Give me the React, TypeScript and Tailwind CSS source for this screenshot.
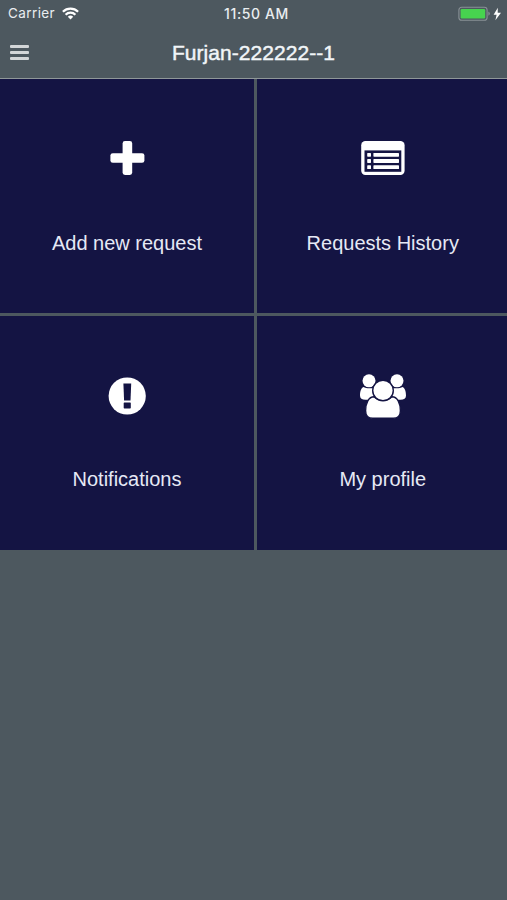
import type { ReactNode } from 'react';

const PlusIcon = () => (
  <svg width="46" height="50" viewBox="0 0 46 50" fill="#fff">
    <rect x="18.6" y="8" width="9.6" height="34" rx="2.4" />
    <rect x="6.4" y="20.2" width="34" height="9.6" rx="2.4" />
  </svg>
);

const ListIcon = () => (
  <svg width="46" height="50" viewBox="0 0 46 50">
    <rect x="1.2" y="8" width="43.4" height="34" rx="4.2" fill="#fff" />
    <rect x="4.5" y="17.4" width="36.8" height="21.4" fill="#141443" />
    {[19.9, 26.1, 32.3].map((y) => (
      <g key={y} fill="#fff">
        <rect x="7.2" y={y} width="3.8" height="3.8" rx="0.6" />
        <rect x="13.4" y={y} width="25.6" height="3.8" rx="0.6" />
      </g>
    ))}
  </svg>
);

const AlertIcon = () => (
  <svg width="46" height="50" viewBox="0 0 46 50">
    <circle cx="23.2" cy="26" r="18.6" fill="#fff" />
    <path d="M19.4 13.6h7.8l-.7 17h-6.4z" fill="#141443" />
    <rect x="19.7" y="32.4" width="7.1" height="6" rx="0.7" fill="#141443" />
  </svg>
);

const UsersIcon = () => (
  <svg width="48" height="50" viewBox="0 0 48 50" fill="#fff">
    <g transform="translate(0 .8)">
      <circle cx="10" cy="10" r="6.5" />
      <circle cx="38" cy="10" r="6.5" />
      <path d="M4.5 16.2c2.2 1.5 8.4 2 11.5.2V29H6.5C3 29 1 27.6 1 24.7c0-3.5.9-7.4 3.5-8.5z" />
      <path d="M43.5 16.2c-2.2 1.5-8.4 2-11.5.2V29h9.5c3.5 0 5.5-1.4 5.5-4.3 0-3.5-.9-7.4-3.5-8.5z" />
      <g stroke="#141443" strokeWidth="1.4">
        <path d="M15 25.9c4.5 4.5 13.5 4.5 18 0 5.3 0 8.4 6.3 8.4 14 0 4.2-2.5 7.6-7.2 7.6H13.8c-4.7 0-7.2-3.4-7.2-7.6 0-7.7 3.1-14 8.4-14z" />
        <circle cx="24" cy="19.7" r="10.3" />
      </g>
    </g>
  </svg>
);

const tiles = [
  { label: 'Add new request', icon: <PlusIcon /> },
  { label: 'Requests History', icon: <ListIcon /> },
  { label: 'Notifications', icon: <AlertIcon /> },
  { label: 'My profile', icon: <UsersIcon /> },
];

const StatusBar = () => (
  <div className="grid h-[28px] grid-cols-[1fr_90px_1fr] items-center pl-[8px] pr-[5px] font-['Inter',sans-serif] text-[13.5px] leading-none text-[#e9edf0]">
    <div className="flex items-center gap-[7px]">
      <span className="tracking-[0.4px]">Carrier</span>
      <svg className="-mt-px" width="17" height="13" viewBox="0 0 17 13" fill="none" stroke="#fff" strokeWidth="2.3">
        <path d="M.9 4.7a10.9 10.9 0 0 1 15.2 0" />
        <path d="M3.6 7.7a7 7 0 0 1 9.8 0" />
        <path d="M8.5 12.4 5.8 9.8a3.9 3.9 0 0 1 5.4 0z" fill="#fff" stroke="none" />
      </svg>
    </div>
    <span className="whitespace-nowrap pl-[3px] text-center text-[14px] font-medium tracking-[0.6px]">11:50 AM</span>
    <div className="flex items-center justify-end">
      <svg className="-mt-px" width="44" height="16" viewBox="0 0 44 16">
        <rect x="0.9" y="1.2" width="28.2" height="13" rx="2.8" fill="none" stroke="#899196" strokeWidth="1.1" />
        <rect x="2.6" y="3" width="24.6" height="9.4" rx="1.2" fill="#47d34f" />
        <path d="M30.4 5.6c2 .8 2 3.4 0 4.2z" fill="#899196" />
        <path d="M39.8 1.8 35.6 8.7h3l-1.2 5.5L43 6.8h-3.3z" fill="#fff" />
      </svg>
    </div>
  </div>
);

const NavBar = () => (
  <div className="grid h-[50px] grid-cols-[40px_1fr_40px] items-center pb-px">
    <div className="flex flex-col gap-[3px] pl-[10px]">
      <span className="h-[3px] w-[19px] rounded-[1px] bg-[#d3d6d8]"></span>
      <span className="h-[3px] w-[19px] rounded-[1px] bg-[#d3d6d8]"></span>
      <span className="h-[3px] w-[19px] rounded-[1px] bg-[#d3d6d8]"></span>
    </div>
    <h1 className="text-center text-[21px] leading-6 tracking-[0.05px] text-[#f1f5f8] [-webkit-text-stroke:0.45px_#f1f5f8]">
      Furjan-222222--1
    </h1>
  </div>
);

const Tile = ({ label, icon }: { label: string; icon: ReactNode }) => (
  <button className="flex flex-col items-center bg-[#141443] pt-[54px]">
    {icon}
    <span className="mt-[47.5px] text-[20px] leading-6 text-[#e6e9f5]">{label}</span>
  </button>
);

const App = () => {
  return (
    <div className="flex min-h-screen flex-col overflow-hidden bg-[#4d585f] font-['Liberation_Sans',sans-serif]">
      <header className="border-b border-[#8f9798]">
        <StatusBar />
        <NavBar />
      </header>

      <main className="grid w-[509px] grid-cols-[254px_1fr] grid-rows-[234px_234px] gap-x-[2.5px] gap-y-[2.5px]">
        {tiles.map((tile) => (
          <Tile key={tile.label} label={tile.label} icon={tile.icon} />
        ))}
      </main>
    </div>
  );
};

export default App;
